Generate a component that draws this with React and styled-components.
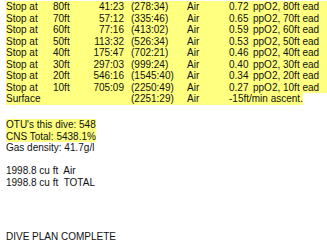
import React from 'react'
import styled, { createGlobalStyle } from 'styled-components'

const GlobalStyle = createGlobalStyle`
  html, body {
    margin: 0;
    padding: 0;
    background: #fff;
  }
  body {
    font-family: "Liberation Sans", Arial, sans-serif;
    font-size: 10px;
    color: #111;
    overflow: hidden;
  }
`

const Page = styled.div`
  width: 327px;
  height: 248px;
  overflow: hidden;
  padding: 1px 0 0 6px;
  box-sizing: border-box;
  display: flex;
  flex-direction: column;
  align-items: flex-start;
`

const Row = styled.div`
  display: flex;
  height: 11.5px;
  line-height: 11.5px;
  white-space: nowrap;
  background: ${props => props.$hl ? '#ffff80' : 'transparent'};
  width: ${props => props.$fill ? 'calc(100% + 10px)' : 'auto'};
`

const Cell = styled.span`
  display: inline-block;
  width: ${props => props.$w ? props.$w + 'px' : 'auto'};
  text-align: ${props => props.$right ? 'right' : 'left'};
  flex-shrink: 0;
`

const Gap = styled.div`
  height: ${props => props.$h}px;
  flex-shrink: 0;
`

const stops = [
  ['80ft', '41:23', '(278:34)', '0.72'],
  ['70ft', '57:12', '(335:46)', '0.65'],
  ['60ft', '77:16', '(413:02)', '0.59'],
  ['50ft', '113:32', '(526:34)', '0.53'],
  ['40ft', '175:47', '(702:21)', '0.46'],
  ['30ft', '297:03', '(999:24)', '0.40'],
  ['20ft', '546:16', '(1545:40)', '0.34'],
  ['10ft', '705:09', '(2250:49)', '0.27'],
]

const App = () => {
  return (
    <>
      <GlobalStyle />
      <Page>
        {stops.map(([depth, time, run, po2]) => (
          <Row key={depth} $hl $fill>
            <Cell $w={47}>Stop at</Cell>
            <Cell $w={40}>{depth}</Cell>
            <Cell $w={31} $right>{time}</Cell>
            <Cell $w={7} />
            <Cell $w={56}>{run}</Cell>
            <Cell $w={42}>Air</Cell>
            <Cell $w={24}>{po2}</Cell>
            <Cell $w={30}>ppO2,</Cell>
            <Cell>{depth} ead</Cell>
          </Row>
        ))}
        <Row $hl>
          <Cell $w={125}>Surface</Cell>
          <Cell $w={56}>(2251:29)</Cell>
          <Cell $w={42}>Air</Cell>
          <Cell>-15ft/min ascent.</Cell>
        </Row>
        <Gap $h={14.5} />
        <Row $hl>OTU's this dive: 548</Row>
        <Row $hl>CNS Total: 5438.1%</Row>
        <Row>Gas density: 41.7g/l</Row>
        <Gap $h={11.5} />
        <Row>1998.8 cu ft&nbsp; Air</Row>
        <Row>1998.8 cu ft&nbsp; TOTAL</Row>
        <Gap $h={43} />
        <Row>DIVE PLAN COMPLETE</Row>
      </Page>
    </>
  )
}

export default App
